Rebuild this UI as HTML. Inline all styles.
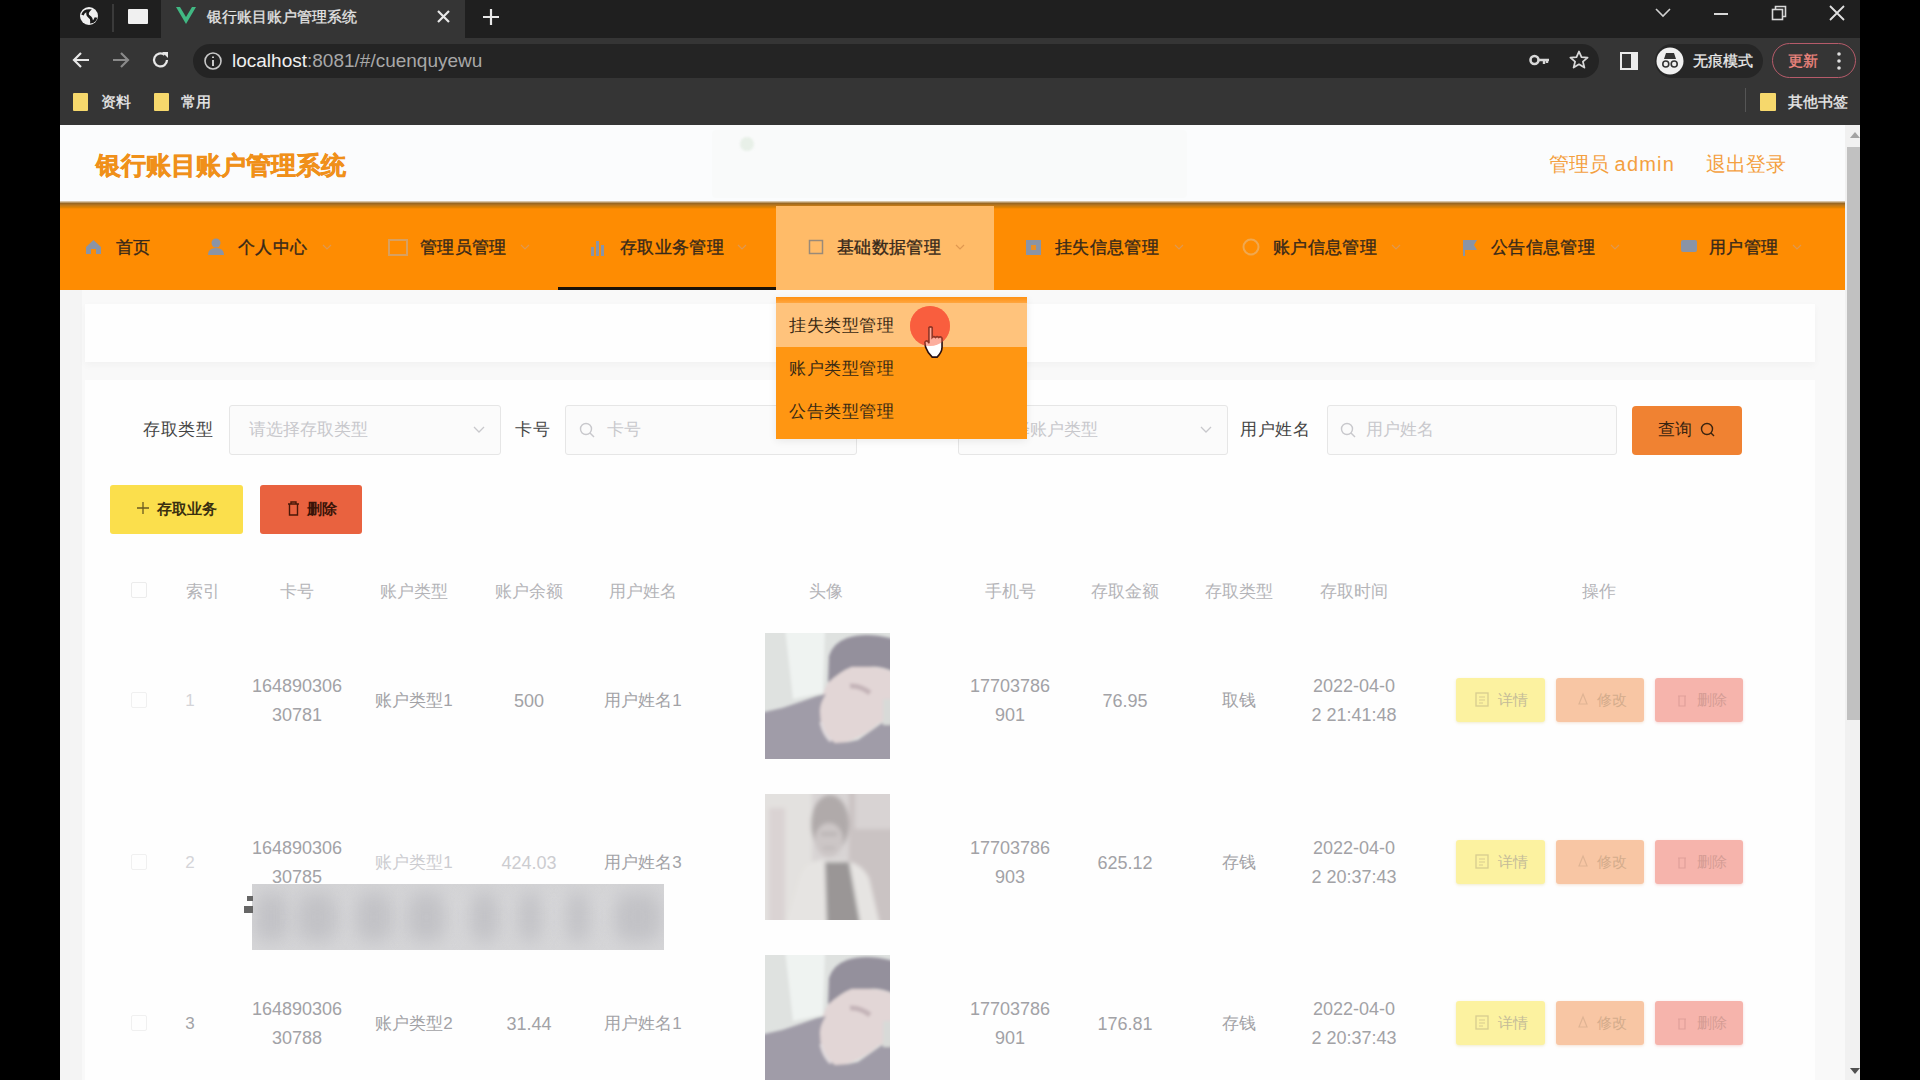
<!DOCTYPE html>
<html><head><meta charset="utf-8"><style>
*{margin:0;padding:0;box-sizing:border-box}
html,body{width:1920px;height:1080px;overflow:hidden;background:#000;font-family:"Liberation Sans",sans-serif}
.a{position:absolute}
.t{position:absolute;white-space:nowrap}
</style></head><body>
<div class="a" style="left:60px;top:0px;width:1800px;height:38px;background:#1f1f1f"></div>
<div class="a" style="left:161px;top:0px;width:304px;height:38px;background:#353535;border-radius:0 0 0 0"></div>
<div class="a" style="left:60px;top:38px;width:1800px;height:87px;background:#353535"></div>
<svg class="a" style="left:79px;top:6px;" width="20" height="20" viewBox="0 0 20 20"><circle cx="10" cy="10" r="9" fill="#f0f0f0"/><path d="M3.5 9 Q5 4.5 10 4.5 Q7 8 10 10.5 Q13 12 12.5 16 Q16 15.5 17 11.5" stroke="#1a1a1a" stroke-width="2.6" fill="none"/></svg>
<div class="a" style="left:112px;top:4px;width:2px;height:28px;background:#3a3a3a"></div>
<div class="a" style="left:128px;top:9px;width:20px;height:15px;background:#f0f0f0;border-radius:1px"></div>
<svg class="a" style="left:176px;top:7px;" width="20" height="18" viewBox="0 0 20 18"><path d="M0 0 L10 17 L20 0 L16 0 L10 10 L4 0 Z" fill="#41b883"/></svg>
<div class="t" style="left:207px;top:2px;height:30px;line-height:30px;font-size:15px;color:#e4e4e4;font-weight:normal;-webkit-text-stroke:0.3px #e4e4e4">银行账目账户管理系统</div>
<svg class="a" style="left:436px;top:9px;" width="15" height="15" viewBox="0 0 15 15"><path d="M2 2 L13 13 M13 2 L2 13" stroke="#e8e8e8" stroke-width="2.2"/></svg>
<svg class="a" style="left:482px;top:8px;" width="18" height="18" viewBox="0 0 18 18"><path d="M9 1 V17 M1 9 H17" stroke="#e8e8e8" stroke-width="2.2"/></svg>
<svg class="a" style="left:1655px;top:6px;" width="16" height="12" viewBox="0 0 16 12"><path d="M1 3 L8 10 L15 3" stroke="#d0d0d0" stroke-width="1.6" fill="none"/></svg>
<div class="a" style="left:1714px;top:13px;width:14px;height:2px;background:#d8d8d8"></div>
<svg class="a" style="left:1771px;top:5px;" width="16" height="16" viewBox="0 0 16 16"><rect x="1.5" y="4.5" width="10" height="10" stroke="#d8d8d8" stroke-width="1.6" fill="none"/><path d="M4.5 4.5 V1.5 H14.5 V11.5 H11.5" stroke="#d8d8d8" stroke-width="1.6" fill="none"/></svg>
<svg class="a" style="left:1829px;top:5px;" width="16" height="16" viewBox="0 0 16 16"><path d="M1 1 L15 15 M15 1 L1 15" stroke="#e0e0e0" stroke-width="1.8"/></svg>
<svg class="a" style="left:71px;top:50px;" width="20" height="20" viewBox="0 0 20 20"><path d="M18 10 H3 M10 3 L3 10 L10 17" stroke="#e8e8e8" stroke-width="2.2" fill="none"/></svg>
<svg class="a" style="left:111px;top:50px;" width="20" height="20" viewBox="0 0 20 20"><path d="M2 10 H17 M10 3 L17 10 L10 17" stroke="#8a8a8a" stroke-width="2.2" fill="none"/></svg>
<svg class="a" style="left:151px;top:50px;" width="20" height="20" viewBox="0 0 20 20"><path d="M16 10 A6.5 6.5 0 1 1 13.5 4.8" stroke="#e8e8e8" stroke-width="2.3" fill="none"/><path d="M11 2 L17 2 L17 8 Z" fill="#e8e8e8"/></svg>
<div class="a" style="left:193px;top:44px;width:1406px;height:34px;background:#242424;border-radius:17px"></div>
<svg class="a" style="left:203px;top:51px;" width="20" height="20" viewBox="0 0 20 20"><circle cx="10" cy="10" r="8" stroke="#c8c8c8" stroke-width="1.6" fill="none"/><path d="M10 9 V15 M10 5.5 V7" stroke="#c8c8c8" stroke-width="2"/></svg>
<div class="t" style="left:232px;top:42px;height:38px;line-height:38px;font-size:19px;color:#333;font-weight:normal;"><span style="color:#f0f0f0">localhost</span><span style="color:#a8a8a8">:8081/#/cuenquyewu</span></div>
<svg class="a" style="left:1529px;top:52px;" width="22" height="16" viewBox="0 0 22 16"><circle cx="5.5" cy="8" r="4" stroke="#d8d8d8" stroke-width="2.6" fill="none"/><path d="M9 8 H20 M15 8 V12 M18 8 V11" stroke="#d8d8d8" stroke-width="2.4"/></svg>
<svg class="a" style="left:1569px;top:50px;" width="20" height="20" viewBox="0 0 20 20"><path d="M10 1.5 L12.5 7.2 L18.6 7.6 L13.9 11.6 L15.4 17.6 L10 14.3 L4.6 17.6 L6.1 11.6 L1.4 7.6 L7.5 7.2 Z" stroke="#d8d8d8" stroke-width="1.8" fill="none" stroke-linejoin="round"/></svg>
<svg class="a" style="left:1620px;top:52px;" width="18" height="18" viewBox="0 0 18 18"><rect x="1" y="1" width="16" height="16" stroke="#ececec" stroke-width="2" fill="none"/><rect x="11" y="1" width="6" height="16" fill="#ececec"/></svg>
<div class="a" style="left:1655px;top:44px;width:108px;height:34px;background:#262626;border-radius:17px"></div>
<svg class="a" style="left:1656px;top:47px;" width="28" height="28" viewBox="0 0 28 28"><circle cx="14" cy="14" r="13.5" fill="#f0f0f0"/><path d="M8 12 H20 L18 6 H10 Z" fill="#333"/><circle cx="9.8" cy="17" r="3" stroke="#333" stroke-width="1.6" fill="none"/><circle cx="18.2" cy="17" r="3" stroke="#333" stroke-width="1.6" fill="none"/></svg>
<div class="t" style="left:1693px;top:46px;height:30px;line-height:30px;font-size:15px;color:#ececec;font-weight:normal;-webkit-text-stroke:0.3px #ececec">无痕模式</div>
<div class="a" style="left:1772px;top:43px;width:84px;height:35px;border:1.5px solid #b65b6a;border-radius:18px"></div>
<div class="t" style="left:1788px;top:46px;height:30px;line-height:30px;font-size:15px;color:#f08880;font-weight:normal;-webkit-text-stroke:0.3px #f08880">更新</div>
<svg class="a" style="left:1836px;top:51px;" width="6" height="20" viewBox="0 0 6 20"><circle cx="3" cy="3" r="1.8" fill="#e0e0e0"/><circle cx="3" cy="10" r="1.8" fill="#e0e0e0"/><circle cx="3" cy="17" r="1.8" fill="#e0e0e0"/></svg>
<div class="a" style="left:73px;top:93px;width:15px;height:18px;background:#f6d86c;border-radius:1px"></div>
<div class="t" style="left:101px;top:87px;height:30px;line-height:30px;font-size:15px;color:#ececec;font-weight:normal;-webkit-text-stroke:0.3px #ececec">资料</div>
<div class="a" style="left:154px;top:93px;width:15px;height:18px;background:#f6d86c;border-radius:1px"></div>
<div class="t" style="left:181px;top:87px;height:30px;line-height:30px;font-size:15px;color:#ececec;font-weight:normal;-webkit-text-stroke:0.3px #ececec">常用</div>
<div class="a" style="left:1745px;top:88px;width:1px;height:24px;background:#555"></div>
<div class="a" style="left:1760px;top:93px;width:16px;height:18px;background:#f6d86c;border-radius:1px"></div>
<div class="t" style="left:1788px;top:87px;height:30px;line-height:30px;font-size:15px;color:#ececec;font-weight:normal;-webkit-text-stroke:0.3px #ececec">其他书签</div>
<div class="a" style="left:60px;top:125px;width:1785px;height:955px;background:#f9f9f9"></div>
<div class="a" style="left:60px;top:290px;width:22px;height:790px;background:#f4f4f4"></div>
<div class="a" style="left:60px;top:125px;width:1785px;height:77px;background:#fbfcfd"></div>
<div class="a" style="left:712px;top:130px;width:475px;height:68px;background:#f9fafa;border-radius:4px"></div>
<div class="a" style="left:740px;top:137px;width:14px;height:14px;background:#e8f0e8;border-radius:50%;filter:blur(1px)"></div>
<div class="t" style="left:96px;top:140px;height:50px;line-height:50px;font-size:25px;color:#f0901a;font-weight:bold;-webkit-text-stroke:0.5px #f0901a">银行账目账户管理系统</div>
<div class="t" style="left:1549px;top:144px;height:40px;line-height:40px;font-size:20px;color:#f4a040;font-weight:normal;">管理员 <span style="letter-spacing:1.2px">admin</span></div>
<div class="t" style="left:1706px;top:144px;height:40px;line-height:40px;font-size:20px;color:#f4a040;font-weight:normal;">退出登录</div>
<div class="a" style="left:60px;top:202px;width:1785px;height:88px;background:#fe8c02"></div>
<div class="a" style="left:60px;top:201px;width:1785px;height:8px;background:linear-gradient(#e8dcc8 0px,#9a6822 2.5px,#c07818 4.5px,#e08200 6.5px,#fe8c02 8px)"></div>
<div class="a" style="left:776px;top:206px;width:218px;height:84px;background:#ffbb68"></div>
<div class="a" style="left:558px;top:287px;width:218px;height:3px;background:#1a1208"></div>
<div class="t" style="left:116px;top:231px;height:34px;line-height:34px;font-size:17px;color:#36281a;font-weight:normal;-webkit-text-stroke:0.35px #36281a;letter-spacing:0.35px">首页</div>
<div class="t" style="left:238px;top:231px;height:34px;line-height:34px;font-size:17px;color:#36281a;font-weight:normal;-webkit-text-stroke:0.35px #36281a;letter-spacing:0.35px">个人中心</div>
<svg class="a" style="left:322px;top:244px;" width="10" height="6" viewBox="0 0 10 6"><path d="M1 1 L5 5 L9 1" stroke="#e09850" stroke-width="1.2" fill="none"/></svg>
<div class="t" style="left:420px;top:231px;height:34px;line-height:34px;font-size:17px;color:#36281a;font-weight:normal;-webkit-text-stroke:0.35px #36281a;letter-spacing:0.35px">管理员管理</div>
<svg class="a" style="left:520px;top:244px;" width="10" height="6" viewBox="0 0 10 6"><path d="M1 1 L5 5 L9 1" stroke="#e09850" stroke-width="1.2" fill="none"/></svg>
<div class="t" style="left:620px;top:231px;height:34px;line-height:34px;font-size:17px;color:#36281a;font-weight:normal;-webkit-text-stroke:0.35px #36281a;letter-spacing:0.35px">存取业务管理</div>
<svg class="a" style="left:737px;top:244px;" width="10" height="6" viewBox="0 0 10 6"><path d="M1 1 L5 5 L9 1" stroke="#e09850" stroke-width="1.2" fill="none"/></svg>
<div class="t" style="left:837px;top:231px;height:34px;line-height:34px;font-size:17px;color:#36281a;font-weight:normal;-webkit-text-stroke:0.35px #36281a;letter-spacing:0.35px">基础数据管理</div>
<svg class="a" style="left:955px;top:244px;" width="10" height="6" viewBox="0 0 10 6"><path d="M1 1 L5 5 L9 1" stroke="#e09850" stroke-width="1.2" fill="none"/></svg>
<div class="t" style="left:1055px;top:231px;height:34px;line-height:34px;font-size:17px;color:#36281a;font-weight:normal;-webkit-text-stroke:0.35px #36281a;letter-spacing:0.35px">挂失信息管理</div>
<svg class="a" style="left:1174px;top:244px;" width="10" height="6" viewBox="0 0 10 6"><path d="M1 1 L5 5 L9 1" stroke="#e09850" stroke-width="1.2" fill="none"/></svg>
<div class="t" style="left:1273px;top:231px;height:34px;line-height:34px;font-size:17px;color:#36281a;font-weight:normal;-webkit-text-stroke:0.35px #36281a;letter-spacing:0.35px">账户信息管理</div>
<svg class="a" style="left:1391px;top:244px;" width="10" height="6" viewBox="0 0 10 6"><path d="M1 1 L5 5 L9 1" stroke="#e09850" stroke-width="1.2" fill="none"/></svg>
<div class="t" style="left:1491px;top:231px;height:34px;line-height:34px;font-size:17px;color:#36281a;font-weight:normal;-webkit-text-stroke:0.35px #36281a;letter-spacing:0.35px">公告信息管理</div>
<svg class="a" style="left:1610px;top:244px;" width="10" height="6" viewBox="0 0 10 6"><path d="M1 1 L5 5 L9 1" stroke="#e09850" stroke-width="1.2" fill="none"/></svg>
<div class="t" style="left:1709px;top:231px;height:34px;line-height:34px;font-size:17px;color:#36281a;font-weight:normal;-webkit-text-stroke:0.35px #36281a;letter-spacing:0.35px">用户管理</div>
<svg class="a" style="left:1792px;top:244px;" width="10" height="6" viewBox="0 0 10 6"><path d="M1 1 L5 5 L9 1" stroke="#e09850" stroke-width="1.2" fill="none"/></svg>
<svg class="a" style="left:85px;top:239px;" width="17" height="16" viewBox="0 0 17 16"><path d="M8.5 1 L16 8 V15 H11 V10 H6 V15 H1 V8 Z" fill="#8a94a6"/></svg>
<svg class="a" style="left:208px;top:238px;" width="16" height="18" viewBox="0 0 16 18"><circle cx="8" cy="5" r="4.5" fill="#8a94a6"/><path d="M0 17 Q0 10 8 10 Q16 10 16 17 Z" fill="#8a94a6"/></svg>
<svg class="a" style="left:388px;top:239px;" width="20" height="17" viewBox="0 0 20 17"><rect x="1" y="1" width="18" height="15" stroke="#d8a060" stroke-width="2" fill="none"/></svg>
<svg class="a" style="left:590px;top:239px;" width="17" height="17" viewBox="0 0 17 17"><rect x="1" y="8" width="3" height="9" fill="#8a94a6"/><rect x="6" y="2" width="3" height="15" fill="#8a94a6"/><rect x="11" y="6" width="3" height="11" fill="#8a94a6"/></svg>
<svg class="a" style="left:808px;top:239px;" width="17" height="17" viewBox="0 0 17 17"><path d="M1.5 1.5 H14.5 V14.5 H1.5 Z" stroke="#9a8a78" stroke-width="1.5" fill="none"/></svg>
<svg class="a" style="left:1025px;top:239px;" width="17" height="17" viewBox="0 0 17 17"><rect x="1" y="1" width="15" height="15" fill="#8a94a6"/><rect x="6" y="6" width="5" height="5" fill="#e8902a"/></svg>
<svg class="a" style="left:1242px;top:238px;" width="18" height="18" viewBox="0 0 18 18"><circle cx="9" cy="9" r="7.5" stroke="#f0a850" stroke-width="2" fill="none"/></svg>
<svg class="a" style="left:1462px;top:239px;" width="16" height="17" viewBox="0 0 16 17"><path d="M1 1 H15 L12 6 L15 11 H3 V17 H1 Z" fill="#8a94a6"/></svg>
<svg class="a" style="left:1680px;top:239px;" width="18" height="16" viewBox="0 0 18 16"><rect x="1" y="1" width="16" height="12" rx="2" fill="#8a94a6"/></svg>
<div class="a" style="left:85px;top:304px;width:1730px;height:58px;background:#fefefe;box-shadow:0 3px 8px rgba(0,0,0,0.035)"></div>
<div class="a" style="left:85px;top:380px;width:1730px;height:700px;background:#fefefe"></div>
<div class="t" style="left:143px;top:413px;height:34px;line-height:34px;font-size:17px;color:#444;font-weight:normal;letter-spacing:0.5px">存取类型</div>
<div class="a" style="left:229px;top:405px;width:272px;height:50px;background:#fbfbfb;border:1px solid #e6e6e6;border-radius:3px"></div>
<div class="t" style="left:249px;top:413px;height:34px;line-height:34px;font-size:17px;color:#c8c8cc;font-weight:normal;">请选择存取类型</div>
<svg class="a" style="left:473px;top:426px;" width="12" height="8" viewBox="0 0 12 8"><path d="M1 1 L6 6 L11 1" stroke="#c8c8cc" stroke-width="1.3" fill="none"/></svg>
<div class="t" style="left:515px;top:413px;height:34px;line-height:34px;font-size:17px;color:#444;font-weight:normal;letter-spacing:0.5px">卡号</div>
<div class="a" style="left:565px;top:405px;width:292px;height:50px;background:#fbfbfb;border:1px solid #e6e6e6;border-radius:3px"></div>
<svg class="a" style="left:579px;top:422px;" width="16" height="16" viewBox="0 0 16 16"><circle cx="7" cy="7" r="5.5" stroke="#c8c8cc" stroke-width="1.4" fill="none"/><path d="M11 11 L15 15" stroke="#c8c8cc" stroke-width="1.4"/></svg>
<div class="t" style="left:607px;top:413px;height:34px;line-height:34px;font-size:17px;color:#c8c8cc;font-weight:normal;">卡号</div>
<div class="a" style="left:958px;top:405px;width:270px;height:50px;background:#fbfbfb;border:1px solid #e6e6e6;border-radius:3px"></div>
<div class="t" style="left:979px;top:413px;height:34px;line-height:34px;font-size:17px;color:#c8c8cc;font-weight:normal;">请选择账户类型</div>
<svg class="a" style="left:1200px;top:426px;" width="12" height="8" viewBox="0 0 12 8"><path d="M1 1 L6 6 L11 1" stroke="#c8c8cc" stroke-width="1.3" fill="none"/></svg>
<div class="t" style="left:1240px;top:413px;height:34px;line-height:34px;font-size:17px;color:#444;font-weight:normal;letter-spacing:0.5px">用户姓名</div>
<div class="a" style="left:1327px;top:405px;width:290px;height:50px;background:#fbfbfb;border:1px solid #e6e6e6;border-radius:3px"></div>
<svg class="a" style="left:1340px;top:422px;" width="16" height="16" viewBox="0 0 16 16"><circle cx="7" cy="7" r="5.5" stroke="#c8c8cc" stroke-width="1.4" fill="none"/><path d="M11 11 L15 15" stroke="#c8c8cc" stroke-width="1.4"/></svg>
<div class="t" style="left:1366px;top:413px;height:34px;line-height:34px;font-size:17px;color:#c8c8cc;font-weight:normal;">用户姓名</div>
<div class="a" style="left:1632px;top:406px;width:110px;height:49px;background:#f08232;border-radius:4px"></div>
<div class="t" style="left:1658px;top:413px;height:34px;line-height:34px;font-size:17px;color:#3a2410;font-weight:normal;">查询</div>
<svg class="a" style="left:1700px;top:422px;" width="16" height="16" viewBox="0 0 16 16"><circle cx="7" cy="7" r="5.5" stroke="#3a2410" stroke-width="1.4" fill="none"/><path d="M11 11 L14 14" stroke="#3a2410" stroke-width="1.4"/></svg>
<div class="a" style="left:110px;top:485px;width:133px;height:49px;background:#fbdf4c;border-radius:3px"></div>
<svg class="a" style="left:137px;top:502px;" width="12" height="12" viewBox="0 0 12 12"><path d="M6 0 V12 M0 6 H12" stroke="#6a5a20" stroke-width="1.3"/></svg>
<div class="t" style="left:157px;top:494px;height:30px;line-height:30px;font-size:15px;color:#3a3010;font-weight:bold;">存取业务</div>
<div class="a" style="left:260px;top:485px;width:102px;height:49px;background:#e9623f;border-radius:3px"></div>
<svg class="a" style="left:287px;top:501px;" width="13" height="15" viewBox="0 0 13 15"><path d="M1 3 H12 M4 3 V1 H9 V3 M2.5 3 V14 H10.5 V3" stroke="#4a1808" stroke-width="1.4" fill="none"/></svg>
<div class="t" style="left:307px;top:494px;height:30px;line-height:30px;font-size:15px;color:#3a1408;font-weight:bold;">删除</div>
<div class="a" style="left:131px;top:582px;width:16px;height:16px;border:1px solid #ececec;border-radius:2px"></div>
<div class="t" style="left:103px;width:200px;text-align:center;top:576px;height:32px;line-height:32px;font-size:17px;color:#b4b4b8">索引</div>
<div class="t" style="left:197px;width:200px;text-align:center;top:576px;height:32px;line-height:32px;font-size:17px;color:#b4b4b8">卡号</div>
<div class="t" style="left:314px;width:200px;text-align:center;top:576px;height:32px;line-height:32px;font-size:17px;color:#b4b4b8">账户类型</div>
<div class="t" style="left:429px;width:200px;text-align:center;top:576px;height:32px;line-height:32px;font-size:17px;color:#b4b4b8">账户余额</div>
<div class="t" style="left:543px;width:200px;text-align:center;top:576px;height:32px;line-height:32px;font-size:17px;color:#b4b4b8">用户姓名</div>
<div class="t" style="left:726px;width:200px;text-align:center;top:576px;height:32px;line-height:32px;font-size:17px;color:#b4b4b8">头像</div>
<div class="t" style="left:910px;width:200px;text-align:center;top:576px;height:32px;line-height:32px;font-size:17px;color:#b4b4b8">手机号</div>
<div class="t" style="left:1025px;width:200px;text-align:center;top:576px;height:32px;line-height:32px;font-size:17px;color:#b4b4b8">存取金额</div>
<div class="t" style="left:1139px;width:200px;text-align:center;top:576px;height:32px;line-height:32px;font-size:17px;color:#b4b4b8">存取类型</div>
<div class="t" style="left:1254px;width:200px;text-align:center;top:576px;height:32px;line-height:32px;font-size:17px;color:#b4b4b8">存取时间</div>
<div class="t" style="left:1499px;width:200px;text-align:center;top:576px;height:32px;line-height:32px;font-size:17px;color:#b4b4b8">操作</div>
<div class="a" style="left:131px;top:692px;width:16px;height:16px;border:1px solid #f0f0f0;border-radius:2px"></div>
<div class="t" style="left:70px;width:240px;text-align:center;top:684px;height:34px;line-height:34px;font-size:17px;color:#d4d4d8">1</div>
<div class="t" style="left:177px;width:240px;text-align:center;top:672px;line-height:29px;font-size:18px;color:#a2a2a6;white-space:normal">164890306<br>30781</div>
<div class="t" style="left:294px;width:240px;text-align:center;top:684px;height:34px;line-height:34px;font-size:17px;color:#a2a2a6">账户类型1</div>
<div class="t" style="left:409px;width:240px;text-align:center;top:683px;height:36px;line-height:36px;font-size:18px;color:#a2a2a6">500</div>
<div class="t" style="left:523px;width:240px;text-align:center;top:684px;height:34px;line-height:34px;font-size:17px;color:#a2a2a6">用户姓名1</div>
<svg class="a" style="left:765px;top:633px;" width="125" height="126" viewBox="0 0 125 126"><defs><filter id="bl1_633" x="-10%" y="-10%" width="120%" height="120%"><feGaussianBlur stdDeviation="1.8"/></filter><clipPath id="cp1_633"><rect width="125" height="126"/></clipPath></defs>
<g clip-path="url(#cp1_633)"><rect width="125" height="126" fill="#dfe2e0"/><g filter="url(#bl1_633)">
<path d="M20 -5 L60 -5 L58 60 L28 66 Z" fill="#eff3f1"/>
<path d="M64 23 Q68 10 82 5 Q100 -1 125 5 L130 7 L130 39 Q115 33 105 34 L87 34 Q76 38 63 50 Z" fill="#94909c"/>
<path d="M63 50 Q76 38 87 34 L105 34 Q118 34 130 40 L130 84 Q120 88 114 90 Q106 98 91 105 Q80 111 70 110 Q60 103 56 89 Q53 75 55 70 Q58 58 63 50 Z" fill="#e2d6d6"/>
<path d="M85 53 Q95 52 105 60" stroke="#c4b4b8" stroke-width="5" fill="none"/>
<path d="M-5 80 L17 75 L35 69 L52 63 L61 61 Q55 70 55 78 Q55 96 63 104 L70 110 Q82 110 93 107 L117 90 L130 86 L130 135 L-5 135 Z" fill="#a09ca8"/>
<path d="M56 89 Q59 102 66 108" stroke="#e0dadd" stroke-width="3" fill="none"/>
<rect x="118" y="66" width="9" height="26" fill="#d8dad8"/>
</g></g></svg>
<div class="t" style="left:890px;width:240px;text-align:center;top:672px;line-height:29px;font-size:18px;color:#a2a2a6;white-space:normal">17703786<br>901</div>
<div class="t" style="left:1005px;width:240px;text-align:center;top:683px;height:36px;line-height:36px;font-size:18px;color:#a2a2a6">76.95</div>
<div class="t" style="left:1119px;width:240px;text-align:center;top:684px;height:34px;line-height:34px;font-size:17px;color:#a2a2a6">取钱</div>
<div class="t" style="left:1234px;width:240px;text-align:center;top:672px;line-height:29px;font-size:18px;color:#a2a2a6;white-space:normal">2022-04-0<br>2 21:41:48</div>
<div class="a" style="left:1456px;top:678px;width:89px;height:44px;background:#fcf2a0;border-radius:3px;box-shadow:0 1px 3px rgba(200,180,60,0.25)"></div>
<svg class="a" style="left:1475px;top:692px;" width="14" height="15" viewBox="0 0 14 15"><rect x="1" y="1" width="12" height="13" stroke="#d8cc90" stroke-width="1.3" fill="none"/><path d="M4 5 H10 M4 8 H10 M4 11 H8" stroke="#d8cc90" stroke-width="1.2"/></svg>
<div class="t" style="left:1498px;top:685px;height:30px;line-height:30px;font-size:15px;color:#c4bc98;font-weight:normal;">详情</div>
<div class="a" style="left:1556px;top:678px;width:88px;height:44px;background:#f8c6a4;border-radius:3px;box-shadow:0 1px 3px rgba(220,140,80,0.25)"></div>
<svg class="a" style="left:1577px;top:692px;" width="12" height="15" viewBox="0 0 12 15"><path d="M6 2 L10 12 H2 Z" stroke="#e0b494" stroke-width="1.2" fill="none"/></svg>
<div class="t" style="left:1597px;top:685px;height:30px;line-height:30px;font-size:15px;color:#d4ac8c;font-weight:normal;">修改</div>
<div class="a" style="left:1655px;top:678px;width:88px;height:44px;background:#f6b4ac;border-radius:3px;box-shadow:0 1px 3px rgba(220,100,90,0.25)"></div>
<svg class="a" style="left:1676px;top:692px;" width="12" height="15" viewBox="0 0 12 15"><path d="M2 4 H10 M3 4 V14 H9 V4" stroke="#e0a09a" stroke-width="1.2" fill="none"/></svg>
<div class="t" style="left:1697px;top:685px;height:30px;line-height:30px;font-size:15px;color:#d49c94;font-weight:normal;">删除</div>
<div class="a" style="left:131px;top:854px;width:16px;height:16px;border:1px solid #f0f0f0;border-radius:2px"></div>
<div class="t" style="left:70px;width:240px;text-align:center;top:846px;height:34px;line-height:34px;font-size:17px;color:#d4d4d8">2</div>
<div class="t" style="left:177px;width:240px;text-align:center;top:834px;line-height:29px;font-size:18px;color:#a2a2a6;white-space:normal">164890306<br>30785</div>
<div class="t" style="left:294px;width:240px;text-align:center;top:846px;height:34px;line-height:34px;font-size:17px;color:#ccccd0">账户类型1</div>
<div class="t" style="left:409px;width:240px;text-align:center;top:845px;height:36px;line-height:36px;font-size:18px;color:#ccccd0">424.03</div>
<div class="t" style="left:523px;width:240px;text-align:center;top:846px;height:34px;line-height:34px;font-size:17px;color:#a2a2a6">用户姓名3</div>
<svg class="a" style="left:765px;top:794px;" width="125" height="126" viewBox="0 0 125 126"><defs><filter id="bl2_794" x="-10%" y="-10%" width="120%" height="120%"><feGaussianBlur stdDeviation="2.2"/></filter><clipPath id="cp2_794"><rect width="125" height="126"/></clipPath></defs>
<g clip-path="url(#cp2_794)"><rect width="125" height="126" fill="#d8d4d4"/><g filter="url(#bl2_794)">
<rect x="-5" y="-5" width="52" height="140" fill="#e3e1df"/>
<rect x="4" y="14" width="16" height="120" fill="#dad3d3"/>
<rect x="84" y="-5" width="45" height="140" fill="#cac3c3"/>
<rect x="90" y="-5" width="40" height="40" fill="#d8d3d3"/>
<ellipse cx="65" cy="30" rx="19" ry="29" fill="#b0aaaa"/>
<ellipse cx="64" cy="46" rx="14" ry="17" fill="#ccc6c6"/>
<path d="M56 40 L72 40" stroke="#b6b0b0" stroke-width="3"/>
<path d="M58 54 L70 54" stroke="#bcb6b6" stroke-width="2.5"/>
<path d="M20 135 L36 80 Q42 68 54 66 L76 66 Q96 68 104 84 L116 135 Z" fill="#e6e4e2"/>
<path d="M60 68 L84 68 L96 135 L62 135 Z" fill="#9a9696"/>
</g></g></svg>
<div class="t" style="left:890px;width:240px;text-align:center;top:834px;line-height:29px;font-size:18px;color:#a2a2a6;white-space:normal">17703786<br>903</div>
<div class="t" style="left:1005px;width:240px;text-align:center;top:845px;height:36px;line-height:36px;font-size:18px;color:#a2a2a6">625.12</div>
<div class="t" style="left:1119px;width:240px;text-align:center;top:846px;height:34px;line-height:34px;font-size:17px;color:#a2a2a6">存钱</div>
<div class="t" style="left:1234px;width:240px;text-align:center;top:834px;line-height:29px;font-size:18px;color:#a2a2a6;white-space:normal">2022-04-0<br>2 20:37:43</div>
<div class="a" style="left:1456px;top:840px;width:89px;height:44px;background:#fcf2a0;border-radius:3px;box-shadow:0 1px 3px rgba(200,180,60,0.25)"></div>
<svg class="a" style="left:1475px;top:854px;" width="14" height="15" viewBox="0 0 14 15"><rect x="1" y="1" width="12" height="13" stroke="#d8cc90" stroke-width="1.3" fill="none"/><path d="M4 5 H10 M4 8 H10 M4 11 H8" stroke="#d8cc90" stroke-width="1.2"/></svg>
<div class="t" style="left:1498px;top:847px;height:30px;line-height:30px;font-size:15px;color:#c4bc98;font-weight:normal;">详情</div>
<div class="a" style="left:1556px;top:840px;width:88px;height:44px;background:#f8c6a4;border-radius:3px;box-shadow:0 1px 3px rgba(220,140,80,0.25)"></div>
<svg class="a" style="left:1577px;top:854px;" width="12" height="15" viewBox="0 0 12 15"><path d="M6 2 L10 12 H2 Z" stroke="#e0b494" stroke-width="1.2" fill="none"/></svg>
<div class="t" style="left:1597px;top:847px;height:30px;line-height:30px;font-size:15px;color:#d4ac8c;font-weight:normal;">修改</div>
<div class="a" style="left:1655px;top:840px;width:88px;height:44px;background:#f6b4ac;border-radius:3px;box-shadow:0 1px 3px rgba(220,100,90,0.25)"></div>
<svg class="a" style="left:1676px;top:854px;" width="12" height="15" viewBox="0 0 12 15"><path d="M2 4 H10 M3 4 V14 H9 V4" stroke="#e0a09a" stroke-width="1.2" fill="none"/></svg>
<div class="t" style="left:1697px;top:847px;height:30px;line-height:30px;font-size:15px;color:#d49c94;font-weight:normal;">删除</div>
<div class="a" style="left:131px;top:1015px;width:16px;height:16px;border:1px solid #f0f0f0;border-radius:2px"></div>
<div class="t" style="left:70px;width:240px;text-align:center;top:1007px;height:34px;line-height:34px;font-size:17px;color:#a2a2a6">3</div>
<div class="t" style="left:177px;width:240px;text-align:center;top:995px;line-height:29px;font-size:18px;color:#a2a2a6;white-space:normal">164890306<br>30788</div>
<div class="t" style="left:294px;width:240px;text-align:center;top:1007px;height:34px;line-height:34px;font-size:17px;color:#a2a2a6">账户类型2</div>
<div class="t" style="left:409px;width:240px;text-align:center;top:1006px;height:36px;line-height:36px;font-size:18px;color:#a2a2a6">31.44</div>
<div class="t" style="left:523px;width:240px;text-align:center;top:1007px;height:34px;line-height:34px;font-size:17px;color:#a2a2a6">用户姓名1</div>
<svg class="a" style="left:765px;top:955px;" width="125" height="126" viewBox="0 0 125 126"><defs><filter id="bl1_955" x="-10%" y="-10%" width="120%" height="120%"><feGaussianBlur stdDeviation="1.8"/></filter><clipPath id="cp1_955"><rect width="125" height="126"/></clipPath></defs>
<g clip-path="url(#cp1_955)"><rect width="125" height="126" fill="#dfe2e0"/><g filter="url(#bl1_955)">
<path d="M20 -5 L60 -5 L58 60 L28 66 Z" fill="#eff3f1"/>
<path d="M64 23 Q68 10 82 5 Q100 -1 125 5 L130 7 L130 39 Q115 33 105 34 L87 34 Q76 38 63 50 Z" fill="#94909c"/>
<path d="M63 50 Q76 38 87 34 L105 34 Q118 34 130 40 L130 84 Q120 88 114 90 Q106 98 91 105 Q80 111 70 110 Q60 103 56 89 Q53 75 55 70 Q58 58 63 50 Z" fill="#e2d6d6"/>
<path d="M85 53 Q95 52 105 60" stroke="#c4b4b8" stroke-width="5" fill="none"/>
<path d="M-5 80 L17 75 L35 69 L52 63 L61 61 Q55 70 55 78 Q55 96 63 104 L70 110 Q82 110 93 107 L117 90 L130 86 L130 135 L-5 135 Z" fill="#a09ca8"/>
<path d="M56 89 Q59 102 66 108" stroke="#e0dadd" stroke-width="3" fill="none"/>
<rect x="118" y="66" width="9" height="26" fill="#d8dad8"/>
</g></g></svg>
<div class="t" style="left:890px;width:240px;text-align:center;top:995px;line-height:29px;font-size:18px;color:#a2a2a6;white-space:normal">17703786<br>901</div>
<div class="t" style="left:1005px;width:240px;text-align:center;top:1006px;height:36px;line-height:36px;font-size:18px;color:#a2a2a6">176.81</div>
<div class="t" style="left:1119px;width:240px;text-align:center;top:1007px;height:34px;line-height:34px;font-size:17px;color:#a2a2a6">存钱</div>
<div class="t" style="left:1234px;width:240px;text-align:center;top:995px;line-height:29px;font-size:18px;color:#a2a2a6;white-space:normal">2022-04-0<br>2 20:37:43</div>
<div class="a" style="left:1456px;top:1001px;width:89px;height:44px;background:#fcf2a0;border-radius:3px;box-shadow:0 1px 3px rgba(200,180,60,0.25)"></div>
<svg class="a" style="left:1475px;top:1015px;" width="14" height="15" viewBox="0 0 14 15"><rect x="1" y="1" width="12" height="13" stroke="#d8cc90" stroke-width="1.3" fill="none"/><path d="M4 5 H10 M4 8 H10 M4 11 H8" stroke="#d8cc90" stroke-width="1.2"/></svg>
<div class="t" style="left:1498px;top:1008px;height:30px;line-height:30px;font-size:15px;color:#c4bc98;font-weight:normal;">详情</div>
<div class="a" style="left:1556px;top:1001px;width:88px;height:44px;background:#f8c6a4;border-radius:3px;box-shadow:0 1px 3px rgba(220,140,80,0.25)"></div>
<svg class="a" style="left:1577px;top:1015px;" width="12" height="15" viewBox="0 0 12 15"><path d="M6 2 L10 12 H2 Z" stroke="#e0b494" stroke-width="1.2" fill="none"/></svg>
<div class="t" style="left:1597px;top:1008px;height:30px;line-height:30px;font-size:15px;color:#d4ac8c;font-weight:normal;">修改</div>
<div class="a" style="left:1655px;top:1001px;width:88px;height:44px;background:#f6b4ac;border-radius:3px;box-shadow:0 1px 3px rgba(220,100,90,0.25)"></div>
<svg class="a" style="left:1676px;top:1015px;" width="12" height="15" viewBox="0 0 12 15"><path d="M2 4 H10 M3 4 V14 H9 V4" stroke="#e0a09a" stroke-width="1.2" fill="none"/></svg>
<div class="t" style="left:1697px;top:1008px;height:30px;line-height:30px;font-size:15px;color:#d49c94;font-weight:normal;">删除</div>
<div class="a" style="left:252px;top:884px;width:412px;height:66px;background:linear-gradient(#d4d4d6,#d8d8da 30%,#d6d6d8);overflow:hidden"><div class="a" style="left:2px;top:8px;width:34px;height:50px;background:#c2c2c6;border-radius:30%;filter:blur(9px)"></div><div class="a" style="left:45px;top:8px;width:41px;height:50px;background:#c2c2c6;border-radius:30%;filter:blur(9px)"></div><div class="a" style="left:103px;top:8px;width:38px;height:50px;background:#c2c2c6;border-radius:30%;filter:blur(9px)"></div><div class="a" style="left:155px;top:8px;width:39px;height:50px;background:#c2c2c6;border-radius:30%;filter:blur(9px)"></div><div class="a" style="left:218px;top:8px;width:29px;height:50px;background:#c2c2c6;border-radius:30%;filter:blur(9px)"></div><div class="a" style="left:266px;top:8px;width:24px;height:50px;background:#c2c2c6;border-radius:30%;filter:blur(9px)"></div><div class="a" style="left:314px;top:8px;width:24px;height:50px;background:#c2c2c6;border-radius:30%;filter:blur(9px)"></div><div class="a" style="left:362px;top:8px;width:48px;height:50px;background:#c2c2c6;border-radius:30%;filter:blur(9px)"></div></div>
<div class="a" style="left:247px;top:896px;width:6px;height:5px;background:#666;filter:blur(0.6px)"></div>
<div class="a" style="left:244px;top:906px;width:9px;height:7px;background:#666;filter:blur(0.6px)"></div>
<div class="a" style="left:776px;top:297px;width:251px;height:142px;background:#ff9612;box-shadow:0 2px 8px rgba(0,0,0,0.08)"></div>
<div class="a" style="left:776px;top:297px;width:251px;height:6px;background:linear-gradient(#ff9010,#ffa640)"></div>
<div class="a" style="left:776px;top:303px;width:251px;height:44px;background:#ffc37c"></div>
<div class="t" style="left:789px;top:309px;height:34px;line-height:34px;font-size:17px;color:#3a2a14;font-weight:normal;letter-spacing:0.5px">挂失类型管理</div>
<div class="t" style="left:789px;top:352px;height:34px;line-height:34px;font-size:17px;color:#3a2a14;font-weight:normal;letter-spacing:0.5px">账户类型管理</div>
<div class="t" style="left:789px;top:395px;height:34px;line-height:34px;font-size:17px;color:#3a2a14;font-weight:normal;letter-spacing:0.5px">公告类型管理</div>
<div class="a" style="left:910px;top:306px;width:40px;height:40px;background:#f95e3e;border-radius:50%"></div>
<svg class="a" style="left:924px;top:326px;" width="26" height="34" viewBox="0 0 26 34"><g transform="scale(0.82)"><path d="M6 2 Q8 0 10 2 V14 Q12 12 14 14 Q16 12 18 14 Q20 12 22 15 V26 Q22 32 16 38 H10 Q4 32 2 26 L1 20 Q2 17 5 19 L6 21 Z" fill="#fff" stroke="#2a1010" stroke-width="2"/></g></svg>
<div class="a" style="left:910px;top:306px;width:40px;height:40px;background:#f95e3e;border-radius:50%;opacity:0.5"></div>
<div class="a" style="left:1845px;top:125px;width:15px;height:955px;background:#f1f1f1"></div>
<div class="a" style="left:1847px;top:147px;width:13px;height:573px;background:#c1c1c1"></div>
<svg class="a" style="left:1850px;top:131px;" width="10" height="7" viewBox="0 0 10 7"><path d="M0 7 L5 1 L10 7 Z" fill="#a3a3a3"/></svg>
<svg class="a" style="left:1850px;top:1068px;" width="10" height="7" viewBox="0 0 10 7"><path d="M0 0 L5 6 L10 0 Z" fill="#505050"/></svg>
</body></html>
